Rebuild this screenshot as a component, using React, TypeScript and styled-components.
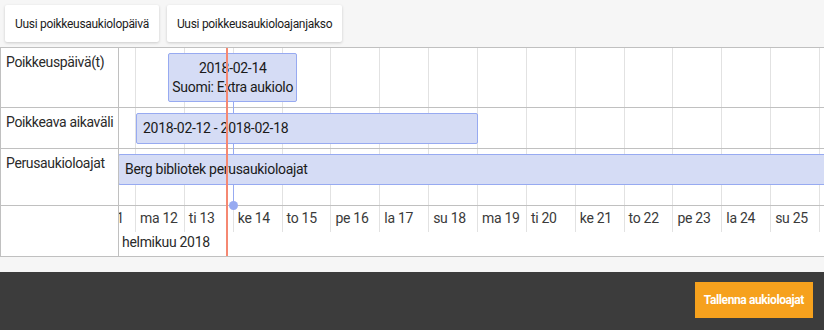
import React from 'react';
import styled, { createGlobalStyle } from 'styled-components';

const DAY_W = 48.86;
const DAY_OFFSET = 16; // where "ma 12" begins inside the track
const dayX = (day: number) => DAY_OFFSET + (day - 12) * DAY_W;

const GlobalStyle = createGlobalStyle`
  html, body {
    margin: 0;
    padding: 0;
    background: #f6f6f6;
    font-family: Roboto, 'Liberation Sans', sans-serif;
    color: #222;
  }
  * { box-sizing: border-box; }
`;

const Page = styled.div`
  width: 824px;
  height: 330px;
  display: flex;
  flex-direction: column;
  overflow: hidden;
`;

const Toolbar = styled.div`
  height: 47px;
  display: flex;
  align-items: flex-start;
  gap: 8px;
  padding: 5px;
`;

const ToolButton = styled.button`
  height: 37px;
  padding: 0 10px;
  background: #fff;
  border: none;
  border-radius: 2px;
  box-shadow: 0 1px 3px rgba(0, 0, 0, 0.18);
  font-family: inherit;
  font-size: 12px;
  letter-spacing: -0.3px;
  color: #1c1c1c;
  cursor: pointer;
`;

const Timeline = styled.div`
  display: flex;
  background: #fff;
  border-top: 1px solid #c0c0c0;
  border-bottom: 1px solid #c0c0c0;
  border-left: 1px solid #c0c0c0;
  overflow: hidden;
`;

const LabelPanel = styled.div`
  width: 118px;
  flex-shrink: 0;
  display: flex;
  flex-direction: column;
  border-right: 1px solid #c0c0c0;
`;

const LabelCell = styled.div<{ $h: number; $last?: boolean }>`
  height: ${(p) => p.$h + (p.$last ? 0 : 1)}px;
  padding: 6px 5px 0;
  font-size: 14px;
  letter-spacing: -0.35px;
  white-space: nowrap;
  color: #2a2a2a;
  border-bottom: ${(p) => (p.$last ? 'none' : '1px solid #c0c0c0')};
`;

const TrackPanel = styled.div`
  position: relative;
  flex: 1;
  display: flex;
  flex-direction: column;
  overflow: hidden;
`;

const DayLine = styled.div`
  position: absolute;
  top: 0;
  width: 1px;
  background: #e2e2e2;
`;

const TrackRow = styled.div<{ $h: number }>`
  position: relative;
  height: ${(p) => p.$h + 1}px;
  border-bottom: 1px solid #c0c0c0;
`;

const Item = styled.div<{ $align?: 'center' | 'left' }>`
  position: absolute;
  top: 5px;
  display: flex;
  flex-direction: column;
  justify-content: center;
  align-items: ${(p) => (p.$align === 'center' ? 'center' : 'flex-start')};
  padding: 0 6px;
  background: #d5dcf5;
  border: 1px solid #97aaf1;
  border-radius: 2px;
  font-size: 14px;
  letter-spacing: -0.3px;
  line-height: 19px;
  color: #1a1a1a;
  white-space: nowrap;
  z-index: 2;
`;

const Connector = styled.div`
  position: absolute;
  width: 1px;
  background: #97aaf1;
  z-index: 1;
`;

const Dot = styled.div`
  position: absolute;
  width: 9px;
  height: 9px;
  border-radius: 50%;
  background: #97aaf1;
  z-index: 1;
`;

const NowLine = styled.div`
  position: absolute;
  top: 0;
  bottom: 0;
  width: 2px;
  background: #f58872;
  z-index: 3;
`;

const AxisRow = styled.div`
  position: relative;
  height: 50px;
`;

const MinorLabel = styled.div`
  position: absolute;
  top: 0;
  height: 26px;
  padding: 4px 0 0 4px;
  border-left: 1px solid #e2e2e2;
  font-size: 14px;
  letter-spacing: -0.3px;
  color: #3a3a3a;
  white-space: nowrap;
`;

const MajorLabel = styled.div`
  position: absolute;
  top: 28px;
  left: 3px;
  font-size: 14px;
  letter-spacing: -0.3px;
  color: #2a2a2a;
`;

const Spacer = styled.div`
  flex: 1;
`;

const Footer = styled.div`
  height: 58px;
  display: flex;
  justify-content: flex-end;
  align-items: flex-start;
  padding: 10px 11px;
  background: #3c3c3c;
`;

const SaveButton = styled.button`
  height: 36px;
  padding: 0 9px;
  background: #f6a11d;
  border: none;
  color: #fff;
  font-family: inherit;
  font-weight: 700;
  font-size: 12px;
  letter-spacing: -0.4px;
  cursor: pointer;
`;

const dayNames = ['su', 'ma', 'ti', 'ke', 'to', 'pe', 'la'];
const days = Array.from({ length: 16 }, (_, i) => 11 + i);

const rows = [
  { label: 'Poikkeuspäivä(t)', h: 59 },
  { label: 'Poikkeava aikaväli', h: 40 },
  { label: 'Perusaukioloajat', h: 56 },
];

const App: React.FC = () => {
  const itemCenter = dayX(14);
  return (
    <Page>
      <GlobalStyle />
      <Toolbar>
        <ToolButton>Uusi poikkeusaukiolopäivä</ToolButton>
        <ToolButton>Uusi poikkeusaukioloajanjakso</ToolButton>
      </Toolbar>

      <Timeline>
        <LabelPanel>
          {rows.map((r) => (
            <LabelCell key={r.label} $h={r.h}>
              {r.label}
            </LabelCell>
          ))}
          <LabelCell $h={50} $last />
        </LabelPanel>

        <TrackPanel>
          {days.map((d) => (
            <DayLine key={d} style={{ left: dayX(d), height: 158 }} />
          ))}
          <Connector style={{ left: itemCenter, top: 53, height: 104 }} />
          <Dot style={{ left: itemCenter - 4, top: 153 }} />
          <NowLine style={{ left: 107 }} />

          <TrackRow $h={rows[0].h}>
            <Item $align="center" style={{ left: itemCenter - 64.5, width: 129, height: 49 }}>
              <span>2018-02-14</span>
              <span>Suomi: Extra aukiolo</span>
            </Item>
          </TrackRow>
          <TrackRow $h={rows[1].h}>
            <Item style={{ left: dayX(12) + 1, width: dayX(19) - dayX(12), height: 31 }}>
              2018-02-12 - 2018-02-18
            </Item>
          </TrackRow>
          <TrackRow $h={rows[2].h}>
            <Item style={{ left: -1, width: 760, height: 31 }}>Berg bibliotek perusaukioloajat</Item>
          </TrackRow>

          <AxisRow>
            {days.map((d) => (
              <MinorLabel key={d} style={{ left: dayX(d) }}>
                {dayNames[(d - 11) % 7]} {d}
              </MinorLabel>
            ))}
            <MajorLabel>helmikuu 2018</MajorLabel>
          </AxisRow>
        </TrackPanel>
      </Timeline>

      <Spacer />
      <Footer>
        <SaveButton>Tallenna aukioloajat</SaveButton>
      </Footer>
    </Page>
  );
};

export default App;
